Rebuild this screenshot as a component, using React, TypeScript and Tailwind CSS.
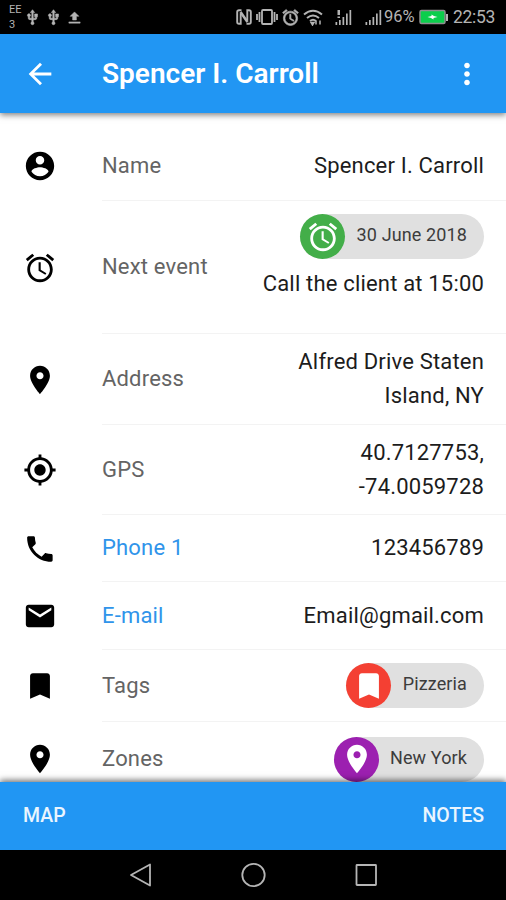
import React from "react";

const PATHS = {
  account:
    "M12 2C6.48 2 2 6.48 2 12s4.48 10 10 10 10-4.48 10-10S17.52 2 12 2zm0 3c1.66 0 3 1.34 3 3s-1.34 3-3 3-3-1.34-3-3 1.34-3 3-3zm0 14.2c-2.5 0-4.71-1.28-6-3.22.03-1.99 4-3.08 6-3.08 1.99 0 5.97 1.09 6 3.08-1.29 1.94-3.5 3.22-6 3.22z",
  alarm:
    "M22 5.72l-4.6-3.86-1.29 1.53 4.6 3.86L22 5.72zM7.88 3.39L6.6 1.86 2 5.71l1.29 1.53 4.59-3.85zM12.5 8H11v6l4.75 2.85.75-1.23-4-2.37V8zM12 4c-4.97 0-9 4.03-9 9s4.02 9 9 9c4.97 0 9-4.03 9-9s-4.03-9-9-9zm0 16c-3.87 0-7-3.13-7-7s3.13-7 7-7 7 3.13 7 7-3.13 7-7 7z",
  place:
    "M12 2C8.13 2 5 5.13 5 9c0 5.25 7 13 7 13s7-7.75 7-13c0-3.87-3.13-7-7-7zm0 9.5c-1.38 0-2.5-1.12-2.5-2.5s1.12-2.5 2.5-2.5 2.5 1.12 2.5 2.5-1.12 2.5-2.5 2.5z",
  gps: "M12 8c-2.21 0-4 1.79-4 4s1.79 4 4 4 4-1.79 4-4-1.79-4-4-4zm8.94 3c-.46-4.17-3.77-7.48-7.94-7.94V1h-2v2.06C6.83 3.52 3.52 6.83 3.06 11H1v2h2.06c.46 4.17 3.77 7.48 7.94 7.94V23h2v-2.06c4.17-.46 7.48-3.77 7.94-7.94H23v-2h-2.06zM12 19c-3.87 0-7-3.13-7-7s3.13-7 7-7 7 3.13 7 7-3.13 7-7 7z",
  phone:
    "M6.54 10.8c1.44 2.83 3.76 5.14 6.59 6.59l2.2-2.2c.27-.27.67-.36 1.02-.24 1.12.37 2.33.57 3.57.57.55 0 1 .45 1 1V20c0 .55-.45 1-1 1-9.39 0-17-7.61-17-17 0-.55.45-1 1-1h3.5c.55 0 1 .45 1 1 0 1.25.2 2.45.57 3.57.11.35.03.74-.25 1.02l-2.2 2.21z",
  mail: "M20 4H4c-1.1 0-2 .9-2 2v12c0 1.1.9 2 2 2h16c1.1 0 2-.9 2-2V6c0-1.1-.9-2-2-2zm0 4l-8 5-8-5V6l8 5 8-5v2z",
  bookmark: "M17 3H7c-1.1 0-2 .9-2 2v16l7-3 7 3V5c0-1.1-.9-2-2-2z",
  back: "M20 11H7.83l5.59-5.59L12 4l-8 8 8 8 1.41-1.41L7.83 13H20v-2z",
  more: "M12 8c1.1 0 2-.9 2-2s-.9-2-2-2-2 .9-2 2 .9 2 2 2zm0 2c-1.1 0-2 .9-2 2s.9 2 2 2 2-.9 2-2-.9-2-2-2zm0 6c-1.1 0-2 .9-2 2s.9 2 2 2 2-.9 2-2-.9-2-2-2z",
  usb: "M15 7v4h1v2h-3V5h2l-3-4-3 4h2v8H8v-2.07c.7-.37 1.2-1.08 1.2-1.93 0-1.21-.99-2.2-2.2-2.2S4.800 7.790 4.800 9c0 .85.5 1.560 1.200 1.930V13c0 1.110.890 2 2 2h3v3.050c-.710.370-1.200 1.100-1.200 1.950 0 1.220.990 2.200 2.200 2.200s2.200-.980 2.200-2.200c0-.850-.490-1.580-1.200-1.950V15h3c1.110 0 2-.890 2-2v-2h1V7h-4z",
  upload: "M9 16h6v-6h4l-7-7-7 7h4zm-6 3h18v2H3z",
};

type IconName = keyof typeof PATHS;

function Icon({ name, className, bold }: { name: IconName; className: string; bold?: boolean }) {
  return (
    <svg
      viewBox="0 0 24 24"
      fill="currentColor"
      stroke={bold ? "currentColor" : "none"}
      strokeWidth="0.800"
      className={`shrink-0 ${className}`}
    >
      <path d={PATHS[name]} />
    </svg>
  );
}

function Signal({ className, mark }: { className: string; mark?: boolean }) {
  return (
    <svg viewBox="0 0 17 17" fill="currentColor" className={`shrink-0 ${className}`}>
      <rect x="0.500" y="13" width="1.700" height="3" />
      <rect x="4" y="11" width="1.700" height="5" />
      <rect x="7.500" y="8" width="1.700" height="8" />
      <rect x="11" y="4.500" width="1.700" height="11.500" />
      <rect x="14.500" y="1" width="1.700" height="15" />
      {mark && <path d="M2.500 1h2.500v5H2.500zM2.500 7.500h2.500v1.500H2.500z" />}
    </svg>
  );
}

function StatusBar() {
  return (
    <div className="flex h-[34px] shrink-0 items-center bg-black pl-[9px] pr-[10px] text-[#b4b4b4]">
      <div className="w-[15px] text-[11px] leading-[15.500px]">
        <div>EE</div>
        <div>3</div>
      </div>
      <Icon name="usb" bold className="h-[17px] w-[17px]" />
      <Icon name="usb" bold className="ml-[4px] h-[17px] w-[17px]" />
      <Icon name="upload" bold className="ml-[5px] h-[15px] w-[15px]" />
      <div className="ml-auto flex items-center">
        <svg viewBox="0 0 16 16" className="h-4 w-4" fill="none" stroke="currentColor">
          <path d="M5.500 1.200H3Q1.200 1.200 1.200 3v10q0 1.800 1.800 1.800h1.700V4.500M11.300 11.500V1.200H13q1.800 0 1.800 1.800v10q0 1.800-1.800 1.800h-2.500" strokeWidth="1.900" />
          <path d="M4.500 3l7 10" strokeWidth="2.600" />
        </svg>
        <svg viewBox="0 0 22 16" className="ml-[4px] h-4 w-[22px]" fill="none" stroke="currentColor" strokeWidth="1.800">
          <rect x="6" y="1" width="10" height="14" rx="1" />
          <path d="M3.500 3v10M18.500 3v10M1 5v6M21 5v6" />
        </svg>
        <Icon name="alarm" bold className="ml-[3px] h-[19px] w-[19px]" />
        <svg viewBox="0 0 20 17" className="ml-[3px] h-[17px] w-5" fill="none" stroke="currentColor" strokeWidth="2">
          <path d="M1 5.500Q10-2 19 5.500M4 9q6-5 12 0M7 12q3-2.500 6 0" />
          <path d="M8 13.500h3l-1.500 2.500zM13 11.500v4M17 11.500v4" strokeWidth="1.500" />
        </svg>
        <Signal mark className="ml-[12px] h-[17px] w-[17px]" />
        <Signal className="ml-[13px] h-[17px] w-[17px]" />
        <span className="ml-[2px] w-[32px] whitespace-nowrap text-[16.500px] leading-none">96%</span>
        <svg viewBox="0 0 30 16" className="ml-[3px] h-4 w-[30px]">
          <rect x="1" y="1.500" width="25" height="13" rx="1.500" fill="#0cce4c" stroke="#8f8f8f" strokeWidth="1.500" />
          <rect x="27" y="5" width="2" height="7" fill="#b4b4b4" />
          <path d="M8.500 8l4-1V5.500l2.500 1.500 3.500 1-4 1v1.500l-2.500-1.500z" fill="#fff" />
        </svg>
        <span className="ml-[4px] w-[43px] whitespace-nowrap pt-[2px] text-[17.500px] leading-none tracking-[-0.300px]">22:53</span>
      </div>
    </div>
  );
}

function Row({
  icon,
  label,
  link,
  height,
  last,
  children,
}: {
  icon: IconName;
  label: string;
  link?: boolean;
  height: string;
  last?: boolean;
  children: React.ReactNode;
}) {
  return (
    <div className={`flex shrink-0 items-center pl-[23px] ${height}`}>
      <Icon name={icon} className="h-[34px] w-[34px] text-black" />
      <div
        className={`ml-[45px] flex h-full flex-1 items-center justify-between pr-[22px] ${
          last ? "" : "border-b border-[#f3f3f3]"
        }`}
      >
        <span className={link ? "text-[#3094ea]" : "text-[#646464]"}>{label}</span>
        <div className="text-right text-[#1c1c1c]">{children}</div>
      </div>
    </div>
  );
}

function Chip({ icon, color, width, children }: { icon: IconName; color: string; width: string; children: string }) {
  return (
    <div className={`ml-auto flex h-[45px] items-center justify-between rounded-full bg-[#e0e0e0] pr-[17px] ${width}`}>
      <span className={`flex h-[45px] w-[45px] items-center justify-center rounded-full text-white ${color}`}>
        <Icon name={icon} className="h-[34px] w-[34px]" />
      </span>
      <span className="pb-[3px] text-[18px] leading-none tracking-[0.120px] text-[#3c3c3c]">{children}</span>
    </div>
  );
}

export default function App() {
  return (
    <div className="flex h-[900px] w-[506px] flex-col overflow-hidden bg-white font-[Roboto,sans-serif]">
      <StatusBar />
      <header className="z-10 flex h-[79px] shrink-0 items-center bg-[#2196f3] pl-[23px] pr-[22px] text-white shadow-[0_2px_6px_rgba(0,0,0,0.5)]">
        <Icon name="back" className="h-[34px] w-[34px]" />
        <h1 className="ml-[45px] text-[28px] font-semibold leading-none">Spencer I. Carroll</h1>
        <Icon name="more" className="ml-auto h-[34px] w-[34px]" />
      </header>
      <main className="flex h-[669px] shrink-0 flex-col overflow-hidden pt-[18px] text-[22px] leading-[34px] tracking-[0.180px]">
        <Row icon="account" label="Name" height="h-[70px]">
          Spencer I. Carroll
        </Row>
        <Row icon="alarm" label="Next event" height="h-[133px]">
          <div className="pb-[19px]">
            <Chip icon="alarm" color="bg-[#43ae49]" width="w-[184px]">
              30 June 2018
            </Chip>
            <div className="mt-[8px]">Call the client at 15:00</div>
          </div>
        </Row>
        <Row icon="place" label="Address" height="h-[91px]">
          <div>Alfred Drive Staten</div>
          <div>Island, NY</div>
        </Row>
        <Row icon="gps" label="GPS" height="h-[90px]">
          <div>40.7127753,</div>
          <div>-74.0059728</div>
        </Row>
        <Row icon="phone" label="Phone 1" link height="h-[67px]">
          123456789
        </Row>
        <Row icon="mail" label="E-mail" link height="h-[68px]">
          Email@gmail.com
        </Row>
        <Row icon="bookmark" label="Tags" height="h-[72px]">
          <Chip icon="bookmark" color="bg-[#f44033]" width="w-[138px]">
            Pizzeria
          </Chip>
        </Row>
        <Row icon="place" label="Zones" height="h-[74px]" last>
          <Chip icon="place" color="bg-[#9c20b0]" width="w-[150px]">
            New York
          </Chip>
        </Row>
      </main>
      <footer className="z-10 flex h-[68px] shrink-0 items-center justify-between bg-[#2196f3] pl-[23px] pr-[22px] text-[19.500px] font-medium text-[#eaf5fe] shadow-[0_-2px_6px_rgba(0,0,0,0.55)]">
        <span>MAP</span>
        <span>NOTES</span>
      </footer>
      <nav className="z-20 flex h-[50px] shrink-0 items-center justify-center gap-[88px] bg-black text-[#b5b5b5]">
        <svg viewBox="0 0 24 26" className="h-[26px] w-6" fill="none" stroke="currentColor" strokeWidth="1.800" strokeLinejoin="round">
          <path d="M3 13L22 2.500v21z" />
        </svg>
        <svg viewBox="0 0 26 26" className="h-[26px] w-[26px]" fill="none" stroke="currentColor" strokeWidth="1.800">
          <circle cx="13.500" cy="13" r="11.200" />
        </svg>
        <svg viewBox="0 0 24 26" className="h-[26px] w-6" fill="none" stroke="currentColor" strokeWidth="1.800">
          <rect x="2.500" y="3" width="19.500" height="20" rx="0.500" />
        </svg>
      </nav>
    </div>
  );
}
